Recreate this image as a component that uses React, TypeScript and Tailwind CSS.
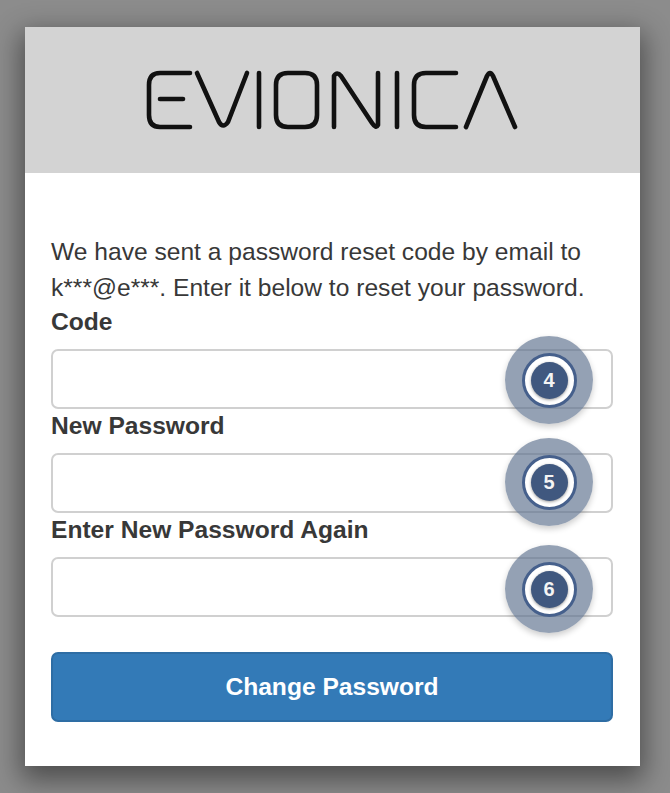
const Marker = ({ n, top }: { n: number; top: string }) => (
  <div className={`absolute right-[20px] ${top} flex h-[88px] w-[88px] items-center justify-center rounded-full bg-[#5a6f8c]/65 shadow-[0_3px_6px_rgba(0,0,0,0.2)]`}>
    <div className="flex h-[55px] w-[55px] items-center justify-center rounded-full border-[3px] border-[#46608c] bg-white">
      <div className="flex h-[37px] w-[37px] items-center justify-center rounded-full bg-[#40587f] text-[20px] font-bold text-[#f4f4f4] shadow-[0_1px_3px_rgba(0,0,0,0.4)]">
        {n}
      </div>
    </div>
  </div>
);

const Field = ({ label, n, top }: { label: string; n: number; top: string }) => (
  <div className="relative">
    <label className="block h-[43px] text-[24.6px] font-bold leading-[32px] text-[#383838]">{label}</label>
    <div className="h-[60px] rounded-[7px] border-[2px] border-[#d0d0d0] bg-white" />
    <Marker n={n} top={top} />
  </div>
);

export default function App() {
  return (
    <div className="h-[793px] w-[670px] overflow-hidden bg-[#8c8c8c] pl-[25px] pt-[27px] [font-family:'Liberation_Sans',Arial,sans-serif]">
      <div className="h-[739px] w-[615px] bg-white shadow-[0_10px_26px_4px_rgba(0,0,0,0.45)]">
        <div className="flex h-[146px] items-center justify-center bg-[#d3d3d3]">
          <svg width="615" height="146" viewBox="25 27 615 146" fill="none" stroke="#111" strokeWidth="4.6" strokeLinecap="round" strokeLinejoin="round">
            <path d="M190 73H160Q149 73 149 85V115Q149 127 160 127H190" />
            <path d="M160 99H183" />
            <path d="M197 73L219 122Q223 129 228 122L247 73" />
            <path d="M259 73V127" />
            <path d="M288 73H305Q317 73 317 85V115Q317 127 305 127H288Q276 127 276 115V85Q276 73 288 73Z" />
            <path d="M334 127V76Q337 71 341 76L372 123Q376 129 378 125V73" />
            <path d="M397 73V127" />
            <path d="M456 73H426Q414 73 414 85V115Q414 127 426 127H456" />
            <path d="M466 127L487 76Q490 70 493 76L515 127" />
          </svg>
        </div>
        <div className="pl-[26px] pr-[27px] pt-[61px]">
          <p className="text-[24.6px] leading-[36px] text-[#383838]">
            We have sent a password reset code by email to
            <br />
            k***@e***. Enter it below to reset your password.
          </p>
          <div className="flex flex-col gap-[1px]">
            <Field label="Code" n={4} top="top-[30px]" />
            <Field label="New Password" n={5} top="top-[28px]" />
            <Field label="Enter New Password Again" n={6} top="top-[31px]" />
          </div>
          <button className="mt-[35px] flex h-[70px] w-full items-center justify-center rounded-[7px] border-[2px] border-[#2e6da4] bg-[#337ab7] text-[24.6px] font-bold text-white">
            Change Password
          </button>
        </div>
      </div>
    </div>
  );
}
